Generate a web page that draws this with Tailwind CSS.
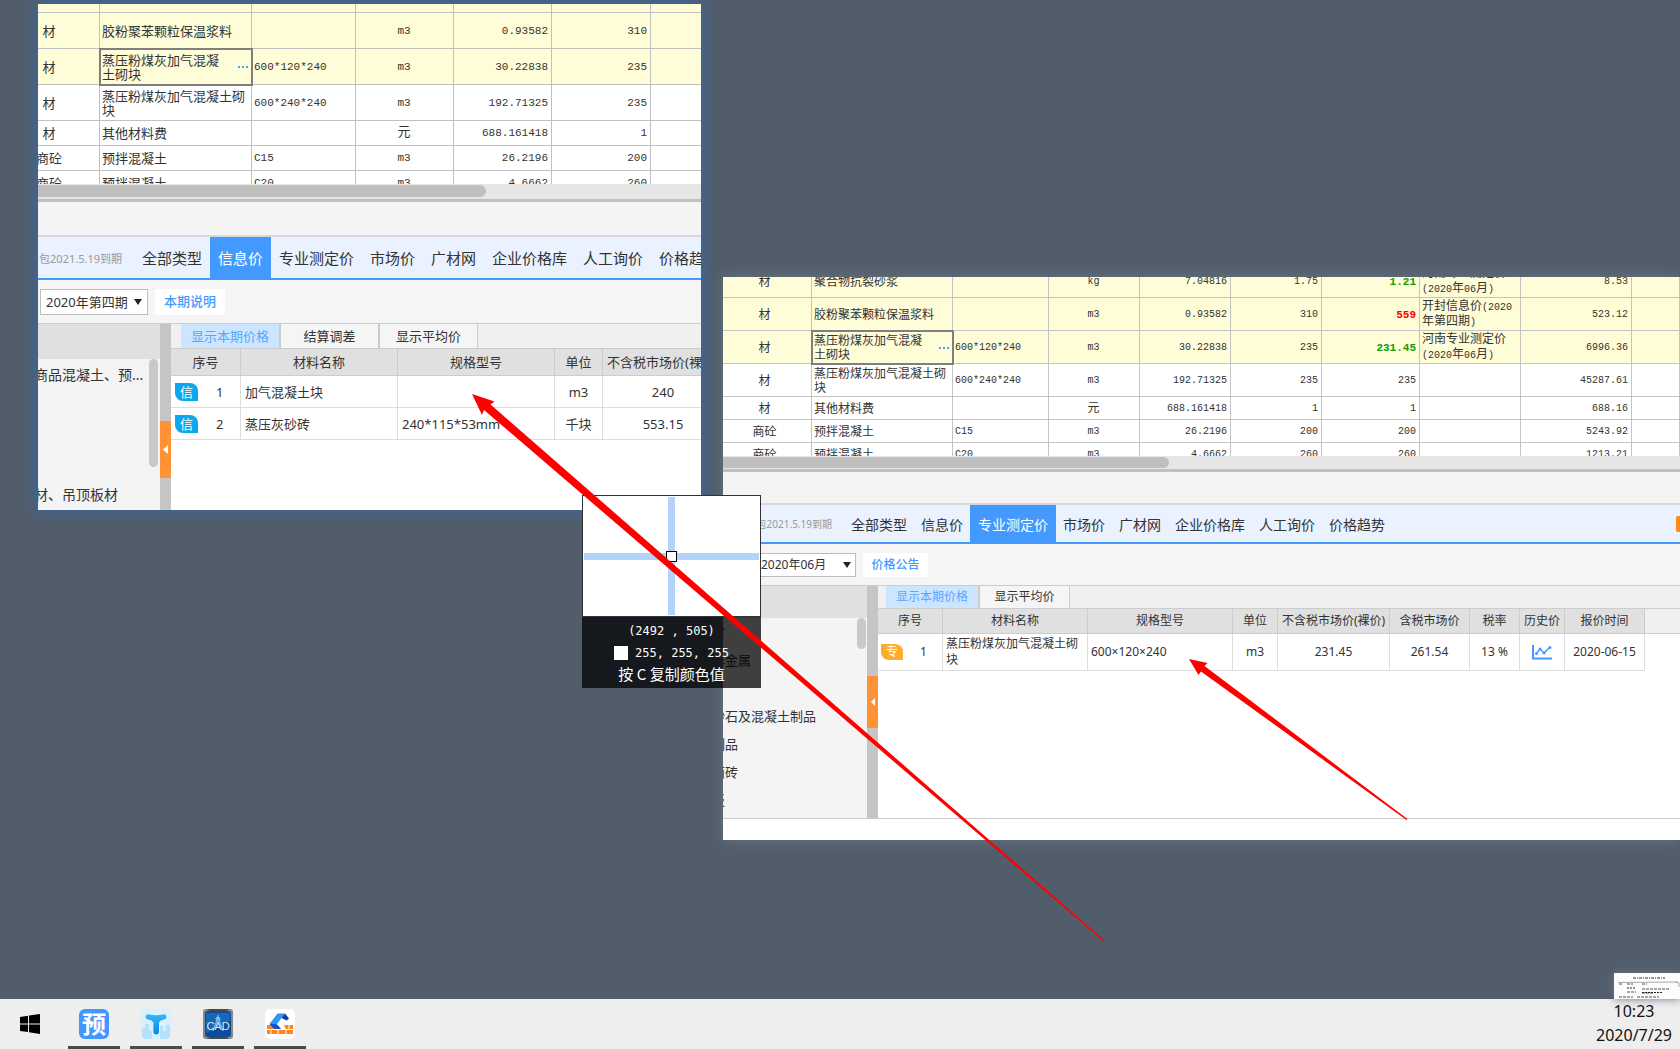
<!DOCTYPE html>
<html lang="zh-CN">
<head>
<meta charset="utf-8">
<meta name="viewport" content="width=device-width, initial-scale=1">
<title>桌面</title>
<script src="https://cdn.jsdelivr.net/npm/@tailwindcss/browser@4"></script>
</head>
<body class="flex h-screen flex-col overflow-hidden bg-[#525d6b] font-['Noto_Sans','Noto_Sans_CJK_SC',sans-serif] text-[#333]">

<main class="relative min-h-0 flex-1">

  <!-- Pinned capture: information price -->
  <section class="absolute top-1 left-[38px] flex h-[506px] w-[663px] flex-col overflow-hidden bg-white text-[13px] shadow-[0_0_12px_2px_#3a679f]">
    <div class="h-[180px] shrink-0 overflow-hidden">
      <table class="-mt-[27px] -ml-[38px] w-[750px] table-fixed border-separate border-spacing-0 leading-[14px] [&_td]:border-r [&_td]:border-b [&_td]:border-[#c0c0c0] [&_td]:pr-[3px] [&_td]:pl-[2px]">
        <colgroup><col class="w-[100px]"><col class="w-[152px]"><col class="w-[104px]"><col class="w-[98px]"><col class="w-[98px]"><col class="w-[99px]"><col></colgroup>
        <tbody class="[&_td:nth-child(1)]:text-center [&_td:nth-child(n+3)]:font-['Liberation_Mono','Noto_Sans_CJK_SC',monospace] [&_td:nth-child(n+3)]:text-[11px] [&_td:nth-child(4)]:text-center [&_td:nth-child(n+5)]:text-right">
          <tr class="h-9 bg-[#fffcd8]"><td></td><td></td><td></td><td></td><td></td><td></td><td></td></tr>
          <tr class="h-9 bg-[#fffcd8]"><td>材</td><td>胶粉聚苯颗粒保温浆料</td><td></td><td>m3</td><td>0.93582</td><td>310</td><td></td></tr>
          <tr class="h-9 bg-[#fffcd8]"><td>材</td><td class="outline-2 -outline-offset-1 outline-[#7f7f7f]"><div class="flex items-center justify-between"><span>蒸压粉煤灰加气混凝<br>土砌块</span><button class="flex gap-[2px]" aria-label="更多"><i class="size-[2px] bg-[#4ba3e8]"></i><i class="size-[2px] bg-[#4ba3e8]"></i><i class="size-[2px] bg-[#4ba3e8]"></i></button></div></td><td>600*120*240</td><td>m3</td><td>30.22838</td><td>235</td><td></td></tr>
          <tr class="h-9"><td>材</td><td>蒸压粉煤灰加气混凝土砌块</td><td>600*240*240</td><td>m3</td><td>192.71325</td><td>235</td><td></td></tr>
          <tr class="h-[25px]"><td>材</td><td>其他材料费</td><td></td><td><span class="text-[13px]">元</span></td><td>688.161418</td><td>1</td><td></td></tr>
          <tr class="h-[25px]"><td>商砼</td><td>预拌混凝土</td><td>C15</td><td>m3</td><td>26.2196</td><td>200</td><td></td></tr>
          <tr class="h-[25px]"><td>商砼</td><td>预拌混凝土</td><td>C20</td><td>m3</td><td>4.6662</td><td>260</td><td></td></tr>
        </tbody>
      </table>
    </div>
    <div class="h-[15px] shrink-0 bg-[#e6e6e6] py-px"><div class="h-3 w-[448px] rounded-r-full bg-[#bfbfbf]"></div></div>
    <div class="h-[3px] shrink-0 bg-[#c0c0c0]"></div>
    <div class="h-[35px] shrink-0 border-b-2 border-[#d6d8da] bg-[#f4f4f4]"></div>
    <nav class="flex h-[43px] shrink-0 items-stretch border-b-2 border-[#4499ff] bg-[#eaf1ff] text-[15px] leading-[43px] whitespace-nowrap text-[#333]">
      <span class="flex w-24 shrink-0 justify-end overflow-hidden pr-3 text-[11px] text-[#999]">包2021.5.19到期</span>
      <a href="#" class="px-2">全部类型</a><a href="#" class="bg-[#4499ff] px-2 text-white">信息价</a><a href="#" class="px-2">专业测定价</a><a href="#" class="px-2">市场价</a><a href="#" class="px-2">广材网</a><a href="#" class="px-2">企业价格库</a><a href="#" class="px-2">人工询价</a><a href="#" class="px-2">价格趋势</a>
    </nav>
    <div class="flex h-[43px] shrink-0 items-center gap-[7px] bg-[#f5f5f5] pl-[2px]">
      <div class="relative w-[108px]">
        <select aria-label="期数" class="h-[26px] w-full appearance-none border border-[#bdbdbd] bg-white pl-[5px] text-[13px] leading-6"><option>2020年第四期</option></select>
        <svg class="pointer-events-none absolute top-[10px] right-[6px] h-[6px] w-2" viewBox="0 0 8 6"><path d="M0 0h8L4 6z" fill="#222"/></svg>
      </div>
      <button class="h-[26px] w-[70px] bg-white font-medium text-[#4499ff]">本期说明</button>
    </div>
    <div class="flex min-h-0 flex-1 border-t border-[#ccc]">
      <aside class="w-[122px] shrink-0 overflow-hidden bg-[#f4f4f4] text-[14px]">
        <div class="h-[35px] bg-[#e0e0e0]"></div>
        <div class="flex justify-between pr-[2px]">
          <ul class="-ml-1 w-[114px] pt-px leading-[30px] whitespace-nowrap">
            <li class="h-[30px]">商品混凝土、预...</li><li class="h-[30px]"></li><li class="h-[30px]"></li><li class="h-[30px]"></li><li class="h-[30px]">材、吊顶板材</li>
          </ul>
          <div class="h-[108px] w-[9px] rounded-full bg-[#c9c9c9]"></div>
        </div>
      </aside>
      <div class="w-[11px] shrink-0 bg-[#c6c5c4] pt-[97px]"><button aria-label="收起" class="flex h-[57px] w-full items-center justify-center bg-[#ff9234]"><svg class="h-[9px] w-[5px]" viewBox="0 0 5 9"><path d="M5 0v9L0 4.500z" fill="#fff"/></svg></button></div>
      <div class="min-w-0 flex-1 overflow-hidden">
        <div class="flex h-6 bg-[#f0f0f0] pl-[10px] leading-6">
          <button class="w-[98px] bg-[#cce6ff] text-[#5aa5ff]">显示本期价格</button>
          <button class="w-[99px] border-l-2 border-[#ccc] bg-[#f5f5f5]">结算调差</button>
          <button class="w-[100px] border-r border-l-2 border-[#ccc] bg-[#f5f5f5]">显示平均价</button>
        </div>
        <table class="w-[553px] table-fixed border-separate border-spacing-0 leading-[18px] [&_td]:border-r [&_td]:border-b [&_td]:border-[#ddd] [&_td]:px-1 [&_th]:border-y [&_th]:border-r [&_th]:border-[#ccc] [&_th]:bg-[#e0e0e0] [&_th]:font-normal">
          <colgroup><col class="w-[70px]"><col class="w-[157px]"><col class="w-[157px]"><col class="w-12"><col class="w-[121px]"></colgroup>
          <thead><tr class="h-7"><th>序号</th><th>材料名称</th><th>规格型号</th><th>单位</th><th>不含税市场价(裸价)</th></tr></thead>
          <tbody class="[&_td:nth-child(n+4)]:text-center">
            <tr class="h-8"><td><div class="flex items-center gap-[18px]"><span class="w-[23px] rounded-tr-lg rounded-bl-lg bg-[#0ba7ef] text-center text-white">信</span>1</div></td><td>加气混凝土块</td><td></td><td>m3</td><td>240</td></tr>
            <tr class="h-8"><td><div class="flex items-center gap-[18px]"><span class="w-[23px] rounded-tr-lg rounded-bl-lg bg-[#0ba7ef] text-center text-white">信</span>2</div></td><td>蒸压灰砂砖</td><td>240*115*53mm</td><td>千块</td><td>553.15</td></tr>
          </tbody>
        </table>
      </div>
    </div>
  </section>

  <!-- Pinned capture: professional estimate price -->
  <section class="absolute top-[277px] right-0 left-[723px] flex h-[563px] flex-col overflow-hidden bg-white text-[12px] shadow-[0_0_12px_1px_#66717d]">
    <div class="h-[179px] shrink-0 overflow-hidden">
      <table class="-mt-[12px] -ml-1 w-[calc(100%+4px)] table-fixed border-separate border-spacing-0 leading-[14px] [&_td]:border-r [&_td]:border-b [&_td]:border-[#c4c4c4] [&_td]:pt-[2px] [&_td]:pr-[3px] [&_td]:pl-[2px]">
        <colgroup><col class="w-[93px]"><col class="w-[141px]"><col class="w-24"><col class="w-[91px]"><col class="w-[91px]"><col class="w-[91px]"><col class="w-[98px]"><col class="w-[101px]"><col class="w-[111px]"><col></colgroup>
        <tbody class="[&_td:nth-child(1)]:text-center [&_td:nth-child(n+3)]:font-['Liberation_Mono','Noto_Sans_CJK_SC',monospace] [&_td:nth-child(n+3)]:text-[10px] [&_td:nth-child(4)]:text-center [&_td:nth-child(5)]:text-right [&_td:nth-child(6)]:text-right [&_td:nth-child(7)]:text-right [&_td:nth-child(9)]:text-right">
          <tr class="h-[33px] bg-[#fffcd8]"><td>材</td><td>聚合物抗裂砂浆</td><td></td><td>kg</td><td>7.04816</td><td>1.75</td><td><b class="text-[11px] text-[#0a9f0a]">1.21</b></td><td><span class="text-[12px]">河南专业测定价</span><br>(2020<span class="text-[12px]">年</span>06<span class="text-[12px]">月</span>)</td><td>8.53</td><td></td></tr>
          <tr class="h-[33px] bg-[#fffcd8]"><td>材</td><td>胶粉聚苯颗粒保温浆料</td><td></td><td>m3</td><td>0.93582</td><td>310</td><td><b class="text-[11px] text-[#f00]">559</b></td><td><span class="text-[12px]">开封信息价</span>(2020<br><span class="text-[12px]">年第四期</span>)</td><td>523.12</td><td></td></tr>
          <tr class="h-[33px] bg-[#fffcd8]"><td>材</td><td class="outline-2 -outline-offset-1 outline-[#7f7f7f]"><div class="flex items-center justify-between"><span>蒸压粉煤灰加气混凝<br>土砌块</span><button class="flex gap-[2px]" aria-label="更多"><i class="size-[2px] bg-[#4ba3e8]"></i><i class="size-[2px] bg-[#4ba3e8]"></i><i class="size-[2px] bg-[#4ba3e8]"></i></button></div></td><td>600*120*240</td><td>m3</td><td>30.22838</td><td>235</td><td><b class="text-[11px] text-[#0a9f0a]">231.45</b></td><td><span class="text-[12px]">河南专业测定价</span><br>(2020<span class="text-[12px]">年</span>06<span class="text-[12px]">月</span>)</td><td>6996.36</td><td></td></tr>
          <tr class="h-[33px]"><td>材</td><td>蒸压粉煤灰加气混凝土砌块</td><td>600*240*240</td><td>m3</td><td>192.71325</td><td>235</td><td>235</td><td></td><td>45287.61</td><td></td></tr>
          <tr class="h-[23px]"><td>材</td><td>其他材料费</td><td></td><td><span class="text-[12px]">元</span></td><td>688.161418</td><td>1</td><td>1</td><td></td><td>688.16</td><td></td></tr>
          <tr class="h-[23px]"><td>商砼</td><td>预拌混凝土</td><td>C15</td><td>m3</td><td>26.2196</td><td>200</td><td>200</td><td></td><td>5243.92</td><td></td></tr>
          <tr class="h-[23px]"><td>商砼</td><td>预拌混凝土</td><td>C20</td><td>m3</td><td>4.6662</td><td>260</td><td>260</td><td></td><td>1213.21</td><td></td></tr>
        </tbody>
      </table>
    </div>
    <div class="h-[13px] shrink-0 bg-[#e6e6e6] py-px"><div class="h-[11px] w-[446px] rounded-r-full bg-[#bfbfbf]"></div></div>
    <div class="h-[3px] shrink-0 bg-[#c0c0c0]"></div>
    <div class="h-[33px] shrink-0 border-b-2 border-[#d6d8da] bg-[#f4f4f4]"></div>
    <nav class="flex h-[39px] shrink-0 items-stretch border-b-2 border-[#4499ff] bg-[#eaf1ff] text-[14px] leading-[39px] whitespace-nowrap">
      <span class="w-[121px] shrink-0 pr-3 text-right text-[10px] text-[#999]">包2021.5.19到期</span>
      <a href="#" class="px-[7px]">全部类型</a><a href="#" class="px-[7px]">信息价</a><a href="#" class="bg-[#4499ff] px-2 text-white">专业测定价</a><a href="#" class="px-[7px]">市场价</a><a href="#" class="px-[7px]">广材网</a><a href="#" class="px-[7px]">企业价格库</a><a href="#" class="px-[7px]">人工询价</a><a href="#" class="px-[7px]">价格趋势</a>
      <span class="ml-auto h-4 w-1 self-center rounded-l-xs bg-[#ff8a14]"></span>
    </nav>
    <div class="flex h-[41px] shrink-0 items-center gap-[7px] bg-[#f5f5f5] pl-8">
      <div class="relative w-[101px]">
        <select aria-label="月份" class="h-6 w-full appearance-none border border-[#bdbdbd] bg-white pl-[5px] text-[12px] leading-[22px]"><option>2020年06月</option></select>
        <svg class="pointer-events-none absolute top-[9px] right-[5px] h-[6px] w-2" viewBox="0 0 8 6"><path d="M0 0h8L4 6z" fill="#222"/></svg>
      </div>
      <button class="h-6 w-[65px] bg-white font-medium text-[#4499ff]">价格公告</button>
    </div>
    <div class="flex h-[234px] shrink-0 border-y border-[#ccc]">
      <aside class="w-36 shrink-0 overflow-hidden bg-[#f4f4f4] text-[13px]">
        <div class="h-8 bg-[#e0e0e0]"></div>
        <div class="flex justify-between pr-px">
          <ul class="-ml-[11px] leading-7 whitespace-nowrap">
            <li class="h-7">材</li><li class="h-7">非金属</li><li class="h-7"></li><li class="h-7">砂石及混凝土制品</li><li class="h-7">制品</li><li class="h-7">面砖</li><li class="h-7">板</li>
          </ul>
          <div class="h-[31px] w-[9px] rounded-full bg-[#c9c9c9]"></div>
        </div>
      </aside>
      <div class="w-[11px] shrink-0 bg-[#c6c5c4] pt-[90px]"><button aria-label="收起" class="flex h-[52px] w-full items-center justify-center bg-[#ff9234]"><svg class="h-[8px] w-[4px]" viewBox="0 0 4 8"><path d="M4 0v8L0 4z" fill="#fff"/></svg></button></div>
      <div class="min-w-0 flex-1 overflow-hidden">
        <div class="flex h-[22px] bg-[#f0f0f0] pl-2 leading-[22px]">
          <button class="w-[92px] bg-[#cce6ff] text-[#5aa5ff]">显示本期价格</button>
          <button class="w-[92px] border-r border-l-2 border-[#ccc] bg-[#f5f5f5]">显示平均价</button>
        </div>
        <table class="w-full table-fixed border-separate border-spacing-0 leading-4 [&_td]:px-[3px] [&_th]:border-y [&_th]:border-[#ccc] [&_th]:font-normal">
          <colgroup><col class="w-[65px]"><col class="w-[145px]"><col class="w-[145px]"><col class="w-[45px]"><col class="w-28"><col class="w-20"><col class="w-[50px]"><col class="w-[45px]"><col class="w-20"><col></colgroup>
          <thead class="[&_th:not(:last-child)]:border-r [&_th:not(:last-child)]:bg-[#e0e0e0]"><tr class="h-[26px]"><th>序号</th><th>材料名称</th><th>规格型号</th><th>单位</th><th>不含税市场价(裸价)</th><th>含税市场价</th><th>税率</th><th>历史价</th><th>报价时间</th><th class="bg-[#f0f0f0]"></th></tr></thead>
          <tbody class="[&_td:not(:last-child)]:border-r [&_td:not(:last-child)]:border-b [&_td:not(:last-child)]:border-[#ddd] [&_td:nth-child(n+4)]:text-center">
            <tr class="h-[37px]"><td><div class="flex items-center gap-[17px]"><span class="w-[22px] rounded-tr-lg rounded-bl-lg bg-[#ffab2e] text-center text-white">专</span>1</div></td><td>蒸压粉煤灰加气混凝土砌块</td><td>600×120×240</td><td>m3</td><td>231.45</td><td>261.54</td><td>13 %</td>
              <td><svg class="mx-auto h-[15px] w-5" viewBox="0 0 20 15" fill="none" stroke="#4499ff"><path d="M1 0v13.500h19" stroke-width="2"/><path d="M4 9l4-5 4 4 6-6" stroke-width="1.500"/><g fill="#4499ff" stroke="none"><circle cx="4.500" cy="8.500" r="1.500"/><circle cx="8" cy="4" r="1.500"/><circle cx="12" cy="8" r="1.500"/><circle cx="18" cy="2.500" r="1.500"/></g></svg></td><td>2020-06-15</td><td></td></tr>
          </tbody>
        </table>
      </div>
    </div>
  </section>

  <!-- Colour picker magnifier -->
  <section class="absolute top-[495px] left-[582px] h-[193px] w-[179px]">
    <div class="relative h-[122px] border border-[#333] bg-white">
      <div class="absolute inset-y-px left-[85px] w-[7px] bg-[#b2d4fa]"></div>
      <div class="absolute inset-x-px top-[57px] h-[7px] bg-[#b2d4fa]"></div>
      <div class="absolute top-[55px] left-[83px] size-[11px] border border-black bg-white"></div>
    </div>
    <div class="flex h-[71px] flex-col items-center bg-black/74 pt-[3px] font-['DejaVu_Sans_Mono','Noto_Sans_CJK_SC',monospace] text-[12px] leading-[22px] text-white">
      <div>(2492 , 505)</div>
      <div class="flex items-center gap-[7px]"><span class="size-[14px] bg-white"></span>255, 255, 255</div>
      <div class="font-['Noto_Sans_CJK_SC',sans-serif] text-[15px] leading-5">按 C 复制颜色值</div>
    </div>
  </section>

  <!-- Thumbnail of a scanned sheet, partly behind the taskbar -->
  <svg class="absolute right-0 bottom-0 h-[26px] w-[66px] shadow-[0_0_8px_#6a7580]" viewBox="0 0 66 26" fill="none" stroke="#555">
    <path d="M0 0h66v26H0z" fill="#fdfbfb" stroke="none"/>
    <path d="M19 5h32" stroke="#333" stroke-dasharray="3 1 1 1"/>
    <path d="M5 11h4m4 0h6m9 0h5M28 16h28M13 19h9M28 20h12M5 24h14m4 0h22" stroke-dasharray="3 1"/>
    <path d="M4 9.500L64 9M61 9l4 1v4" stroke="#aaa"/>
    <path d="M13 15h9m6 4.500h20" stroke="#222" stroke-dasharray="2 1"/>
  </svg>

  <!-- Arrow annotations -->
  <svg class="pointer-events-none absolute top-0 left-0 size-full" fill="#f00">
    <path d="M472 394L494.500 401.500L490.500 404.500L1104 940L1103 941L484 410L482 415z"/>
    <path d="M1189 659L1207.500 663L1204.500 666L1407.500 819L1406.500 820L1201 671.500L1198.500 675z"/>
  </svg>
</main>

<footer class="flex h-[50px] shrink-0 items-stretch bg-[#eee] text-[#111]">
  <button aria-label="开始" class="mr-2 flex w-[60px] items-center justify-center"><svg class="h-5 w-5" viewBox="0 0 20 20"><path d="M0 3l8-1.200V9.400H0zM9 1.600L20 0v9.400H9zM0 10.400h8V18L0 17zM9 10.400h11V20L9 18.300z"/></svg></button>
  <nav class="flex gap-[10px]">
    <button aria-label="预算" class="flex w-[52px] items-center justify-center border-b-[3px] border-[#4a4a4a] pt-[3px]"><span class="size-[30px] rounded-md bg-[#4296ff] text-center text-[24px] leading-[29px] font-bold text-white">预</span></button>
    <button aria-label="T" class="flex w-[52px] items-center justify-center border-b-[3px] border-[#4a4a4a] pt-[3px]">
      <svg class="size-[30px]" viewBox="0 0 30 30"><defs><linearGradient id="t" x1="0" x2="0" y2="1"><stop stop-color="#35b8f8"/><stop offset="1" stop-color="#0a86ea"/></linearGradient></defs><rect width="30" height="30" rx="5" fill="#d9f1fd"/><path d="M1 28V19h3v-4h4v7h3v8H4zM19 30V17h3v5h3v-6h4v12l-2 2z" fill="#b5e2fa"/><path d="M7 5.200q8 2 16 0 2.500 0 2.500 2.500T23 10.500q-4 .5-5 3v9q0 3-2.800 3t-2.800-3v-9q-1-2.500-5.400-3Q4.500 10 4.500 7.700T7 5.200z" fill="url(#t)"/></svg></button>
    <button aria-label="CAD" class="flex w-[52px] items-center justify-center border-b-[3px] border-[#4a4a4a] pt-[3px]">
      <svg class="size-[30px]" viewBox="0 0 30 30"><rect width="30" height="30" rx="3" fill="#8b8682"/><path d="M4 0h22L22 3H8zM4 30h22l-4-3H8z" fill="#4c4846"/><rect x="2" y="2" width="26" height="26" rx="3" fill="#0c4d9b"/><path d="M3 4h24v8L3 24z" fill="#1468bd"/><path d="M15 8l-5 14m5-14l5 14M15 6v3" stroke="#9fc6ee" fill="none"/><circle cx="15" cy="10" r="2" fill="none" stroke="#9fc6ee"/><text x="15" y="21" text-anchor="middle" font-family="Liberation Sans, sans-serif" font-size="11" fill="#dce9f5">CAD</text></svg></button>
    <button aria-label="建筑" class="flex w-[52px] items-center justify-center border-b-[3px] border-[#4a4a4a] pt-[3px]">
      <svg class="size-[30px]" viewBox="0 0 30 30"><rect width="30" height="30" rx="5" fill="#fff"/><path d="M2 16h26v4H2zM2 21h26v4H2z" fill="#ff8618"/><path d="M9 16v4M19 16v4M24 16v4M6 21v4M13 21v4M21 21v4" stroke="#fff"/><path d="M11 13l5 7h5l-5-7z" fill="#fff"/><path d="M4.500 15L12.500 4.500H20L12 15z" fill="#2f93fa"/><path d="M4.500 15H11.500L16 20H9z" fill="#0c56cf"/><path d="M20 4.500L24 9.500 21.500 11.500 16.500 9z" fill="#0a3f9f"/></svg></button>
  </nav>
  <time class="mr-2 ml-auto flex flex-col items-center text-[16px] leading-6" datetime="2020-07-29T10:23"><span>10:23</span><span>2020/7/29</span></time>
</footer>
</body>
</html>
